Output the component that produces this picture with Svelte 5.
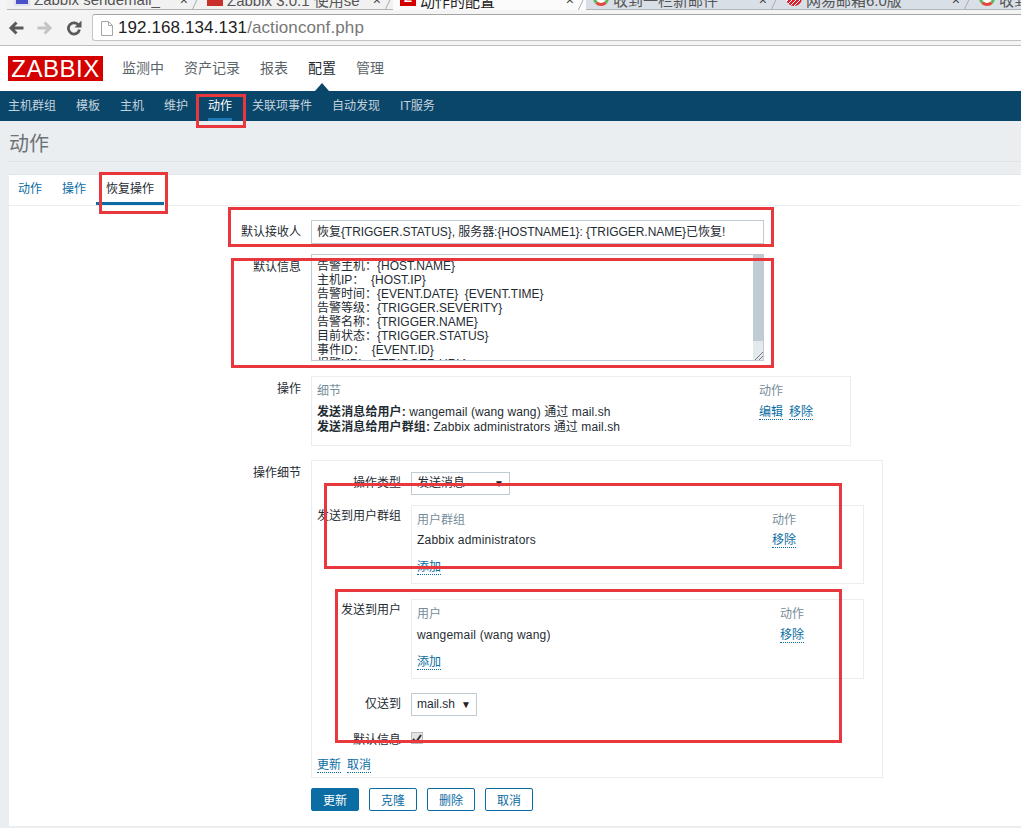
<script>
  const topNav = ['监测中', '资产记录', '报表', '配置', '管理'];
  const subNav = ['主机群组', '模板', '主机', '维护', '动作', '关联项事件', '自动发现', 'IT服务'];
  const tabs = [
    { title: 'Zabbix sendemail_', icon: 'doc', closable: true, light: true },
    { title: 'Zabbix 3.0.1 使用se', icon: 'red', closable: true, light: true },
    { title: '动作的配置', icon: 'z', closable: true, active: true },
    { title: '收到一栏新邮件', icon: 'mail', closable: true },
    { title: '网易邮箱6.0版', icon: 'netease', closable: true },
    { title: '收到', icon: 'mail' }
  ];
  const message = `告警主机：{HOST.NAME}
主机IP：  {HOST.IP}
告警时间：{EVENT.DATE}  {EVENT.TIME}
告警等级：{TRIGGER.SEVERITY}
告警名称：{TRIGGER.NAME}
目前状态：{TRIGGER.STATUS}
事件ID：  {EVENT.ID}
报警URL：{TRIGGER.URL}`;
</script>

<div class="browser">
  <div class="tabstrip">
    {#each tabs as tab}
      <div class="tab" class:active={tab.active} class:light={tab.light}>
        <span class="favicon {tab.icon}">{tab.icon === 'z' ? 'Z' : ''}</span>
        <span class="tab-title">{tab.title}</span>
        {#if tab.closable}<span class="tab-close">×</span>{/if}
      </div>
    {/each}
  </div>
  <div class="toolbar">
    <svg width="16" height="14" viewBox="0 0 16 14" class="nav-icon"><path d="M15.500 7H3.500M8.500 1.500 3 7l5.500 5.500" fill="none" stroke="#5a5a5a" stroke-width="3"/></svg>
    <svg width="16" height="14" viewBox="0 0 16 14" class="nav-icon"><path d="M.5 7h12M7.500 1.500 13 7l-5.500 5.500" fill="none" stroke="#c4c4c4" stroke-width="3"/></svg>
    <svg width="16" height="16" viewBox="0 0 16 16" class="nav-icon reload"><path d="M12.800 5.500a5.600 5.600 0 1 0 .7 4" fill="none" stroke="#5a5a5a" stroke-width="2.800"/><path d="M15.500 .5v7h-7z" fill="#5a5a5a"/></svg>
    <div class="omnibox">
      <svg width="12" height="15" viewBox="0 0 12 15"><path d="M.5 .5h7l4 4v10h-11zM7.500 .5v4h4" fill="#fff" stroke="#a5a5a5"/></svg>
      <span class="url"><b>192.168.134.131</b>/actionconf.php</span>
    </div>
  </div>
</div>

<header class="main-nav">
  <div class="logo">ZABBIX</div>
  <nav>
    {#each topNav as item}
      <span class:current={item === '配置'}>{item}</span>
    {/each}
  </nav>
</header>

<div class="sub-nav">
  {#each subNav as item}
    <span class:current={item === '动作'}>{item}</span>
  {/each}
</div>

<main>
  <h1>动作</h1>
  <section class="card">
    <div class="card-tabs">
      <span>动作</span>
      <span>操作</span>
      <span class="selected">恢复操作</span>
    </div>

    <div class="form">
      <div class="row row-input">
        <div class="label">默认接收人</div>
        <div class="text-input">恢复{'{'}TRIGGER.STATUS}, 服务器:{'{'}HOSTNAME1}: {'{'}TRIGGER.NAME}已恢复!</div>
      </div>

      <div class="row row-message">
        <div class="label">默认信息</div>
        <div class="textarea">
          <pre>{message}</pre>
          <div class="scrollbar"><div class="thumb"></div></div>
          <svg class="grip" width="9" height="9" viewBox="0 0 9 9"><path d="M1 9l8-8M5 9l4-4" stroke="#777" fill="none"/></svg>
        </div>
      </div>

      <div class="row row-ops">
        <div class="label">操作</div>
        <div class="box ops-box">
          <div class="table-row">
            <div class="head">细节</div>
            <div class="head">动作</div>
          </div>
          <div class="table-row">
            <div class="ops-text">
              <div><strong>发送消息给用户:</strong> wangemail (wang wang) 通过 mail.sh</div>
              <div><strong>发送消息给用户群组:</strong> Zabbix administrators 通过 mail.sh</div>
            </div>
            <div class="links"><a href="#edit">编辑</a><a href="#remove">移除</a></div>
          </div>
        </div>
      </div>

      <div class="row row-detail">
        <div class="label">操作细节</div>
        <div class="box detail-box">
          <div class="inner-row type-row">
            <div class="label">操作类型</div>
            <div class="select type-select"><span>发送消息</span><i>▼</i></div>
          </div>
          <div class="inner-row group-row">
            <div class="label">发送到用户群组</div>
            <div class="box recipients">
              <div class="rec-grid group-grid">
                <div class="head">用户群组</div>
                <div class="head">动作</div>
                <div class="name">Zabbix administrators</div>
                <div><a href="#remove">移除</a></div>
              </div>
              <a href="#add" class="add">添加</a>
            </div>
          </div>
          <div class="inner-row user-row">
            <div class="label">发送到用户</div>
            <div class="box recipients">
              <div class="rec-grid user-grid">
                <div class="head">用户</div>
                <div class="head">动作</div>
                <div class="name">wangemail (wang wang)</div>
                <div><a href="#remove">移除</a></div>
              </div>
              <a href="#add" class="add">添加</a>
            </div>
          </div>
          <div class="inner-row only-row">
            <div class="label">仅送到</div>
            <div class="select mail-select"><span>mail.sh</span><i>▼</i></div>
          </div>
          <div class="inner-row check-row">
            <div class="label">默认信息</div>
            <div class="checkbox">
              <svg width="10" height="9" viewBox="0 0 10 9"><path d="M1 5l3 3 5-7" fill="none" stroke="#333" stroke-width="2"/></svg>
            </div>
          </div>
          <div class="links detail-links"><a href="#update">更新</a><a href="#cancel">取消</a></div>
        </div>
      </div>

      <div class="buttons">
        <button class="primary">更新</button>
        <button>克隆</button>
        <button>删除</button>
        <button>取消</button>
      </div>
    </div>
  </section>
</main>

<!-- red annotation boxes drawn over the screenshot -->
<div class="mark" style="left: 196px; top: 94px; width: 44px; height: 28px"></div>
<div class="mark" style="left: 99px; top: 172px; width: 63px; height: 36px"></div>
<div class="mark" style="left: 228px; top: 207px; width: 540px; height: 34px"></div>
<div class="mark" style="left: 231px; top: 258px; width: 537px; height: 104px"></div>
<div class="mark" style="left: 324px; top: 483px; width: 512px; height: 80px"></div>
<div class="mark" style="left: 335px; top: 589px; width: 501px; height: 148px"></div>

<style>
  :global(body) {
    background: #ebeef0;
    font-family: 'Liberation Sans', 'Noto Sans CJK SC', sans-serif;
    font-size: 12px;
    color: #1f2c33;
    overflow: hidden;
  }

  .browser {
    background: #f4f4f4;
    height: 46px;
    overflow: hidden;
  }

  .tabstrip {
    display: flex;
    height: 10px;
    padding-left: 7px;
    overflow: hidden;
    background: #f4f4f4;
  }

  .tab {
    position: relative;
    display: flex;
    flex: none;
    align-items: center;
    gap: 4px;
    box-sizing: border-box;
    width: 193px;
    height: 22px;
    margin-top: -12px;
    padding: 2px 12px 0 7px;
    background: #d9dfe6;
    border-bottom: 1px solid #b0b4b8;
    font-size: 15px;
    color: #555;
  }

  .tab::after {
    content: '';
    position: absolute;
    top: 0;
    right: 2px;
    bottom: 0;
    width: 1px;
    background: #a8acb0;
    transform: skewX(-25deg);
  }

  .tab.light {
    background: #f1f1f1;
  }

  .tab.active {
    background: #fbfbfb;
    border-bottom: none;
    color: #222;
  }

  .favicon {
    flex: none;
    box-sizing: border-box;
    width: 16px;
    height: 16px;
    transform: translateY(-2px);
    color: #fff;
    font-size: 13px;
    font-weight: bold;
    line-height: 16px;
    text-align: center;
  }

  .favicon.doc { background: #4a50c8; border: 2px solid #dfe0f0; }
  .favicon.red { background: #c9302c; }
  .favicon.z { background: #d40000; }
  .favicon.mail { background: #fff; border-radius: 50%; border: 3px solid #5bb85c; border-bottom-color: #e2483d; }
  .favicon.netease { background: repeating-linear-gradient(-45deg, #d8202c 0 2px, #fff 2px 3px); border-radius: 50%; }

  .tab-title {
    flex: 1;
    overflow: hidden;
    white-space: nowrap;
  }

  .tab-close {
    color: #444;
    font-size: 14px;
  }

  .toolbar {
    display: flex;
    align-items: center;
    height: 36px;
    box-sizing: border-box;
    padding: 4px 0 4px 8px;
    border-bottom: 1px solid #bdbdbd;
  }

  .nav-icon {
    flex: none;
    margin-right: 13px;
  }

  .nav-icon.reload {
    margin-right: 10px;
  }

  .omnibox {
    flex: 1;
    display: flex;
    align-items: center;
    gap: 5px;
    box-sizing: border-box;
    height: 27px;
    padding: 1px 0 0 8px;
    background: #fff;
    border: 1px solid #c4c4c4;
    border-top-color: #a4a4a4;
    border-right: none;
    border-radius: 3px 0 0 3px;
  }

  .url {
    font-size: 17px;
    letter-spacing: 0.1px;
    color: #777;
  }

  .url b {
    font-weight: normal;
    color: #222;
  }

  .main-nav {
    display: flex;
    align-items: center;
    height: 45px;
    padding-left: 8px;
    background: #fff;
  }

  .logo {
    width: 95px;
    height: 25px;
    background: #d40000;
    color: #fff;
    font-size: 24px;
    letter-spacing: 0.5px;
    line-height: 25px;
    text-align: center;
  }

  .main-nav nav {
    display: flex;
    gap: 20px;
    margin: 0 0 3px 19px;
    font-size: 14px;
    color: #5b6469;
  }

  .main-nav .current {
    position: relative;
    color: #1f2c33;
  }

  .main-nav .current::after {
    content: '';
    position: absolute;
    left: 7px;
    bottom: -14px;
    border: 7.5px solid transparent;
    border-top: none;
    border-bottom: 8px solid #0a466a;
  }

  .sub-nav {
    display: flex;
    gap: 20px;
    height: 30px;
    padding-left: 8px;
    background: #0a466a;
    color: #c5d3dc;
    line-height: 31px;
  }

  .sub-nav .current {
    height: 30px;
    color: #fff;
    box-shadow: inset 0 -3px 0 #1b7ab5;
  }

  main {
    padding: 0 0 0 9px;
  }

  h1 {
    margin: 0 0 12px;
    padding: 10px 0 4px;
    font-size: 20px;
    font-weight: normal;
    line-height: 26px;
    color: #6c7377;
    border-bottom: 1px solid #e0e3e5;
  }

  .card {
    height: 652px;
    background: #fff;
    border-top: 1px solid #e3e6e8;
    box-sizing: border-box;
  }

  .card-tabs {
    display: flex;
    height: 30px;
    margin-left: -1px;
    border-bottom: 1px solid #ebeef0;
    color: #0b6da3;
  }

  .card-tabs span {
    padding: 0 10px;
    line-height: 28px;
  }

  .card-tabs .selected {
    height: 30px;
    box-sizing: border-box;
    color: #1f2c33;
    border-bottom: 3px solid #0b6da3;
  }

  .form {
    display: flex;
    flex-direction: column;
    padding-top: 14px;
  }

  .row {
    display: flex;
    align-items: flex-start;
  }

  .row > .label {
    flex: none;
    width: 302px;
    padding-right: 10px;
    box-sizing: border-box;
    text-align: right;
    line-height: 24px;
  }

  .row-message > .label,
  .row-ops > .label,
  .row-detail > .label {
    padding-top: 1px;
  }

  .row-input {
    margin-bottom: 10px;
  }

  .text-input {
    width: 453px;
    height: 24px;
    box-sizing: border-box;
    padding: 0 5px;
    border: 1px solid #bfcbd1;
    letter-spacing: -0.05px;
    line-height: 22px;
    white-space: nowrap;
    overflow: hidden;
  }

  .row-message {
    margin-bottom: 15px;
  }

  .textarea {
    position: relative;
    width: 453px;
    height: 107px;
    box-sizing: border-box;
    border: 1px solid #bfcbd1;
    overflow: hidden;
  }

  .textarea pre {
    margin: 0;
    padding: 4px 5px;
    font: inherit;
    line-height: 14px;
  }

  .scrollbar {
    position: absolute;
    top: 0;
    right: 0;
    bottom: 0;
    width: 10px;
    background: #e3e9ed;
  }

  .thumb {
    height: 86px;
    background: #bfccd4;
  }

  .grip {
    position: absolute;
    right: 0;
    bottom: 0;
  }

  .row-ops {
    margin-bottom: 14px;
  }

  .box {
    box-sizing: border-box;
    background: #fff;
    border: 1px solid #ebeef0;
  }

  .ops-box {
    width: 540px;
    height: 70px;
    padding: 7px 5px;
  }

  .table-row {
    display: grid;
    grid-template-columns: 442px 1fr;
    line-height: 14px;
  }

  .head {
    color: #768d99;
  }

  .table-row .head {
    padding-bottom: 7px;
  }

  .ops-text {
    letter-spacing: 0.1px;
    line-height: 15px;
  }

  .links {
    display: flex;
    align-items: flex-start;
    gap: 6px;
  }

  a {
    color: #0b6da3;
    text-decoration: none;
    border-bottom: 1px dotted #0b6da3;
  }

  .detail-box {
    width: 572px;
    height: 318px;
    padding-top: 11px;
  }

  .inner-row {
    display: flex;
    align-items: flex-start;
  }

  .inner-row > .label {
    flex: none;
    width: 89px;
    margin-right: 10px;
    text-align: right;
    line-height: 23px;
    white-space: nowrap;
  }

  .select {
    display: flex;
    justify-content: space-between;
    align-items: center;
    height: 23px;
    box-sizing: border-box;
    padding: 0 5px;
    border: 1px solid #bfcbd1;
    line-height: 21px;
  }

  .select i {
    font-style: normal;
    font-size: 10px;
    color: #222;
  }

  .type-select {
    width: 99px;
  }

  .mail-select {
    width: 66px;
  }

  .type-row {
    margin-bottom: 10px;
  }

  .group-row {
    margin-bottom: 15px;
  }

  .recipients {
    width: 453px;
    height: 79px;
    padding: 7px 5px;
  }

  .user-row .recipients {
    height: 80px;
  }

  .rec-grid {
    display: grid;
    row-gap: 7px;
    line-height: 14px;
  }

  .name {
    letter-spacing: 0.2px;
  }

  .group-grid {
    grid-template-columns: 355px 1fr;
    row-gap: 6px;
  }

  .user-grid {
    grid-template-columns: 363px 1fr;
  }

  .add {
    display: inline-block;
    margin-top: 13px;
    line-height: 14px;
  }

  .user-row {
    margin-bottom: 14px;
  }

  .only-row {
    margin-bottom: 13px;
  }

  .checkbox {
    display: flex;
    align-items: center;
    justify-content: center;
    width: 12px;
    height: 12px;
    margin-top: 3px;
    background: #e4e4e4;
    border: 1px solid #bbb;
    box-sizing: border-box;
  }

  .check-row {
    margin-bottom: 3px;
  }

  .detail-links {
    padding-left: 5px;
  }

  .buttons {
    display: flex;
    gap: 10px;
    margin: 10px 0 0 302px;
  }

  button {
    width: 48px;
    height: 23px;
    padding: 0;
    background: #fff;
    border: 1px solid #0b6da3;
    border-radius: 2px;
    color: #0b6da3;
    font: inherit;
  }

  button.primary {
    background: #0b6da3;
    color: #fff;
  }

  .mark {
    position: absolute;
    border: 3px solid #e8383d;
    pointer-events: none;
  }
</style>
